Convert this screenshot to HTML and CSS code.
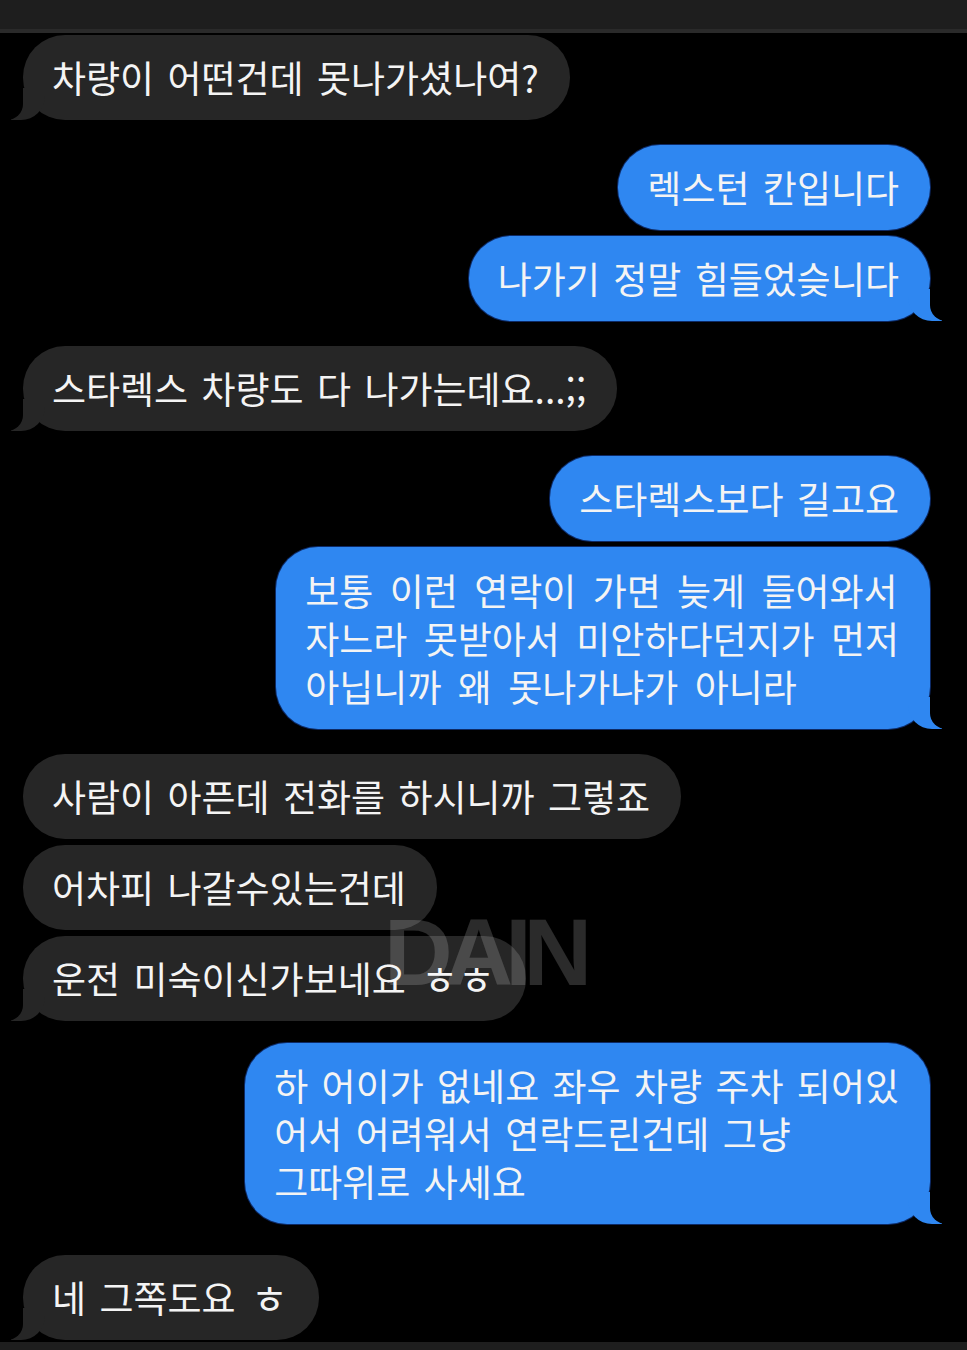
FILE: index.html
```html
<!DOCTYPE html>
<html lang="ko">
<head>
<meta charset="utf-8">
<title>메시지</title>
<link rel="stylesheet" href="styles.css">
</head>
<body>
<div class="screen">
  <div class="topbar"></div>
  <div class="chat">
    <div class="msg them tail first">차량이 어떤건데 못나가셨나여?</div>
    <div class="msg me grp">렉스턴 칸입니다</div>
    <div class="msg me cont tail">나가기 정말 힘들었슺니다</div>
    <div class="msg them grp tail">스타렉스 차량도 다 나가는데요...;;</div>
    <div class="msg me grp">스타렉스보다 길고요</div>
    <div class="msg me cont tail wide">보통 이런 연락이 가면 늦게 들어와서<br>자느라 못받아서 미안하다던지가 먼저<br>아닙니까 왜 못나가냐가 아니라</div>
    <div class="msg them grp">사람이 아픈데 전화를 하시니까 그렇죠</div>
    <div class="msg them cont">어차피 나갈수있는건데</div>
    <div class="msg them cont tail">운전 미숙이신가보네요 <span class="small">ㅎㅎ</span></div>
    <div class="msg me grp2 tail">하 어이가 없네요 좌우 차량 주차 되어있<br>어서 어려워서 연락드린건데 그냥<br>그따위로 사세요</div>
    <div class="msg them last tail">네 그쪽도요 <span class="small">ㅎ</span></div>
  </div>
  <div class="bottombar"></div>
  <div class="watermark">DAIN</div>
</div>
</body>
</html>
```

FILE: styles.css
```css
html, body {
  margin: 0;
  padding: 0;
  background: #000;
}

.screen {
  position: relative;
  width: 967px;
  height: 1350px;
  overflow: hidden;
  background: #000;
  display: flex;
  flex-direction: column;
  font-family: "Noto Sans CJK KR", "Noto Sans", sans-serif;
}

.topbar {
  height: 29px;
  background: #1e1e1e;
  border-bottom: 4px solid #2a2a2a;
  flex: none;
}

.chat {
  flex: 1;
  display: flex;
  flex-direction: column;
  padding: 2px 37px 0 23px;
}

.msg {
  position: relative;
  padding: 18px 31px 19px 29px;
  border-radius: 42px;
  font-size: 37px;
  line-height: 48px;
  word-spacing: 3px;
  color: #f4f4f4;
  white-space: nowrap;
}

.msg.wide { word-spacing: 6px; padding-top: 19px; padding-bottom: 19px; }

.msg.first { margin-top: 0; }
.msg.grp { margin-top: 25px; }
.msg.grp2 { margin-top: 22px; }
.msg.cont { margin-top: 6px; }
.msg.last { margin-top: 31px; }

.them {
  align-self: flex-start;
  background: #262626;
}

.me {
  align-self: flex-end;
  background: #2f87f1;
  box-shadow: 0 0 0 1px #0d2a66;
}

.small {
  font-size: 40px;
  line-height: 40px;
  letter-spacing: 0;
  margin-left: 2px;
  vertical-align: -1px;
}

/* tails */
.tail::before,
.tail::after {
  content: "";
  position: absolute;
  bottom: 0;
  height: 32px;
}

.them.tail::before {
  left: -12px;
  width: 34px;
  background: #262626;
  border-bottom-right-radius: 24px;
}
.them.tail::after {
  left: -17px;
  width: 17px;
  background: #000;
  border-bottom-right-radius: 16px;
}

.me.tail::before {
  right: -12px;
  width: 34px;
  background: #2f87f1;
  border-bottom-left-radius: 24px;
}
.me.tail::after {
  right: -17px;
  width: 17px;
  background: #000;
  border-bottom-left-radius: 16px;
}

.bottombar {
  height: 8px;
  background: #1e1e1e;
  flex: none;
}

.watermark {
  position: absolute;
  left: 384px;
  top: 898px;
  font-family: "Liberation Sans", Arial, sans-serif;
  font-weight: bold;
  font-size: 95px;
  letter-spacing: -8px;
  color: rgba(255, 255, 255, 0.17);
  pointer-events: none;
}
```
